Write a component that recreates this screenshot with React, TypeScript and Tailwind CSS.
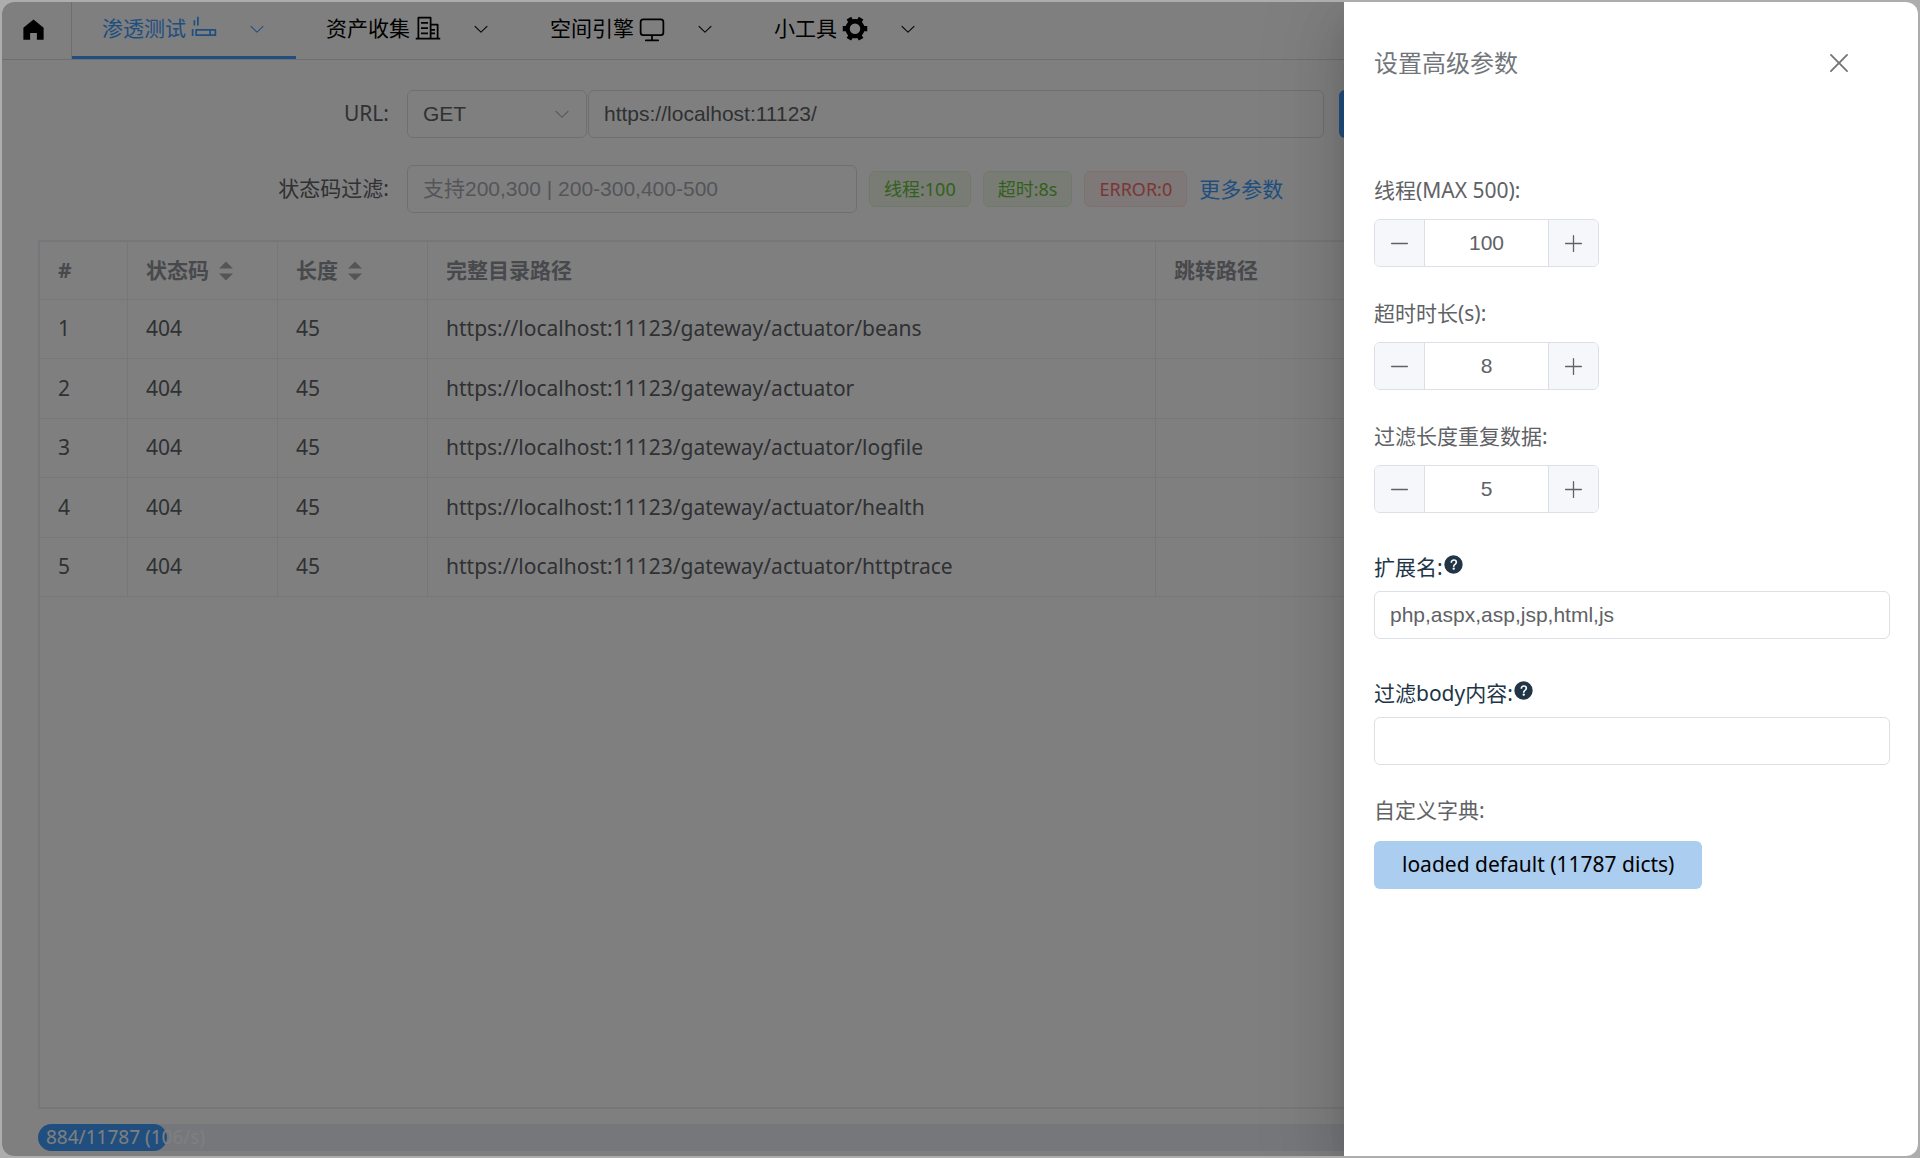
import React, { useState } from 'react';

const paths = {
  home: 'M512 128 128 447.936V896h255.936V640H640v256h255.936V447.936z',
  smoking:
    'M256 576v128h640V576zm-32-64h704a32 32 0 0 1 32 32v192a32 32 0 0 1-32 32H224a32 32 0 0 1-32-32V544a32 32 0 0 1 32-32M704 576h64v128h-64zM256 64h64v320h-64zM128 192h64v192h-64zM64 512h64v256H64z',
  office:
    'M192 128v704h384V128zm-32-64h448a32 32 0 0 1 32 32v768a32 32 0 0 1-32 32H160a32 32 0 0 1-32-32V96a32 32 0 0 1 32-32M256 256h256v64H256zm0 192h256v64H256zm0 192h256v64H256zm384-128h128v64H640zm0 128h128v64H640zM64 832h896v64H64zM640 384v448h192V384zm-32-64h256a32 32 0 0 1 32 32v512a32 32 0 0 1-32 32H608a32 32 0 0 1-32-32V352a32 32 0 0 1 32-32',
  monitor:
    'M544 768v128h192a32 32 0 1 1 0 64H288a32 32 0 1 1 0-64h192V768H192A128 128 0 0 1 64 640V256a128 128 0 0 1 128-128h640a128 128 0 0 1 128 128v384a128 128 0 0 1-128 128zM192 192a64 64 0 0 0-64 64v384a64 64 0 0 0 64 64h640a64 64 0 0 0 64-64V256a64 64 0 0 0-64-64z',
  tools:
    'M764.416 254.72a351.68 351.68 0 0 1 86.336 149.184H960v192.064H850.752a351.68 351.68 0 0 1-86.336 149.312l54.72 94.72-166.272 96-54.592-94.72a352.64 352.64 0 0 1-172.48 0L371.136 936l-166.272-96 54.72-94.72a351.68 351.68 0 0 1-86.336-149.312H64v-192h109.248a351.68 351.68 0 0 1 86.336-149.312L204.8 160l166.208-96h.192l54.656 94.592a352.64 352.64 0 0 1 172.352 0L652.8 64h.128L819.2 160l-54.72 94.72zM704 499.968a192 192 0 1 0-384 0 192 192 0 0 0 384 0',
  arrowDown:
    'M831.872 340.864 512 652.672 192.128 340.864a30.592 30.592 0 0 0-42.752 0 29.12 29.12 0 0 0 0 41.6L489.664 714.24a32 32 0 0 0 44.672 0l340.288-331.712a29.12 29.12 0 0 0 0-41.728 30.592 30.592 0 0 0-42.752 0z',
  question:
    'M512 64a448 448 0 1 1 0 896 448 448 0 0 1 0-896m23.744 191.488c-52.096 0-92.928 14.784-123.2 44.352-30.976 29.568-45.76 70.4-45.76 122.496h80.256c0-29.568 5.632-52.8 17.6-68.992 13.376-19.712 35.2-28.864 66.176-28.864 23.936 0 42.944 6.336 56.32 19.712 12.672 13.376 19.712 31.68 19.712 54.912 0 17.6-6.336 34.496-19.008 49.984l-8.448 9.856c-45.76 40.832-73.216 70.4-82.368 89.408-9.856 19.008-14.08 42.24-14.08 68.992v9.856h80.96v-9.856c0-16.896 3.52-31.68 10.56-45.76 6.336-12.672 15.488-24.64 28.16-35.2 33.792-29.568 54.208-48.576 60.544-55.616 16.896-22.528 26.048-51.392 26.048-86.592 0-42.944-14.08-76.736-42.24-101.376-28.16-25.344-65.472-37.312-111.232-37.312m-12.672 406.208a54.272 54.272 0 0 0-38.72 14.784 49.28 49.28 0 0 0-15.488 38.016c0 15.488 4.928 28.16 15.488 38.016A54.848 54.848 0 0 0 523.072 768c15.488 0 28.16-4.928 38.72-14.784a51.52 51.52 0 0 0 16.192-38.72 51.968 51.968 0 0 0-15.488-38.016 55.936 55.936 0 0 0-39.424-14.784',
  close:
    'M764.288 214.592 512 466.88 259.712 214.592a31.936 31.936 0 0 0-45.12 45.12L466.752 512 214.528 764.224a31.936 31.936 0 1 0 45.12 45.184L512 557.184l252.288 252.288a31.936 31.936 0 0 0 45.12-45.12L557.12 512.064l252.288-252.352a31.936 31.936 0 1 0-45.12-45.184z',
  minus: 'M128 544h768a32 32 0 1 0 0-64H128a32 32 0 0 0 0 64',
  plus: 'M480 480V128a32 32 0 0 1 64 0v352h352a32 32 0 1 1 0 64H544v352a32 32 0 1 1-64 0V544H128a32 32 0 0 1 0-64z',
};

type IconName = keyof typeof paths;

function Icon({ name, className }: { name: IconName; className: string }) {
  return (
    <svg viewBox="0 0 1024 1024" fill="currentColor" aria-hidden="true" className={`shrink-0 ${className}`}>
      <path d={paths[name]} />
    </svg>
  );
}

const menus: { label: string; icon: IconName; active?: boolean }[] = [
  { label: '渗透测试', icon: 'smoking', active: true },
  { label: '资产收集', icon: 'office' },
  { label: '空间引擎', icon: 'monitor' },
  { label: '小工具', icon: 'tools' },
];

const rows = ['beans', '', 'logfile', 'health', 'httptrace'].map((name, i) => ({
  id: i + 1,
  status: 404,
  length: 45,
  url: 'https://localhost:11123/gateway/actuator' + (name ? '/' + name : ''),
}));

const arial = "font-['Liberation_Sans','Noto_Sans_CJK_SC',sans-serif]";
const field = `h-12 rounded-md border border-[#dcdfe6] bg-white px-[15px] text-[21px] text-[#606266] outline-none placeholder:text-[#a8abb2] ${arial}`;
const cell = 'border-r border-b border-[#ebeef5] px-[18px]';
const tag = 'flex h-9 items-center rounded-md border px-[14px]';

function SortHeader({ label }: { label: string }) {
  return (
    <button className="flex items-center gap-[10px] font-bold">
      {label}
      <svg viewBox="0 0 14 20" fill="#a8abb2" aria-hidden="true" className="h-5 w-[14px]">
        <path d="M0 7.5 7 .5l7 7zM0 12.5l7 7 7-7z" />
      </svg>
    </button>
  );
}

function NumberField({ id, label, initial }: { id: string; label: string; initial: number }) {
  const [value, setValue] = useState(initial);
  return (
    <div className="mb-[27px]">
      <label htmlFor={id} className="block h-12 pt-1 leading-[30px]">{label}</label>
      <div className="flex h-12 w-[225px] overflow-hidden rounded-md border border-[#dcdfe6]">
        <button
          aria-label="-"
          onClick={() => setValue(value - 1)}
          className="flex w-[50px] items-center justify-center border-r border-[#dcdfe6] bg-[#f5f7fa]"
        >
          <Icon name="minus" className="size-[21px]" />
        </button>
        <input
          id={id}
          value={value}
          onChange={(e) => setValue(Number(e.target.value) || 0)}
          className={`min-w-0 flex-1 bg-white text-center outline-none ${arial}`}
        />
        <button
          aria-label="+"
          onClick={() => setValue(value + 1)}
          className="flex w-[50px] items-center justify-center border-l border-[#dcdfe6] bg-[#f5f7fa]"
        >
          <Icon name="plus" className="size-[21px]" />
        </button>
      </div>
    </div>
  );
}

function TextField({ id, label, initial }: { id: string; label: string; initial: string }) {
  return (
    <div className="mb-[30px] text-[#213547]">
      <label htmlFor={id} className="flex h-12 items-start pt-[9px] leading-[30px]">
        {label}
        <Icon name="question" className="mt-0.5 size-[21px]" />
      </label>
      <input id={id} defaultValue={initial} className={`w-full ${field}`} />
    </div>
  );
}

function Header() {
  return (
    <nav className="flex h-[58px] shrink-0 border-b border-[#dcdfe6]">
      <a href="#" aria-label="home" className="flex w-[70px] items-center border-r border-[#dcdfe6] pb-[3px] pl-[18px]">
        <Icon name="home" className="size-[27px]" />
      </a>
      {menus.map((m) => (
        <button
          key={m.label}
          className={`flex items-center border-b-[3px] px-[30px] ${m.active ? 'border-[#409eff] text-[#409eff]' : 'border-transparent'}`}
        >
          {m.label}
          <Icon name={m.icon} className="ml-1 size-7" />
          <Icon name="arrowDown" className="ml-[30px] size-[18px]" />
        </button>
      ))}
    </nav>
  );
}

function ScanForm() {
  return (
    <form className="flex flex-col gap-[27px]">
      <div className="flex items-center">
        <label htmlFor="url" className="mr-[18px] w-[351px] shrink-0 text-right">URL:</label>
        <div className="relative mr-px">
          <select aria-label="method" className={`w-[180px] appearance-none ${field}`}>
            <option>GET</option>
            <option>POST</option>
          </select>
          <Icon name="arrowDown" className="pointer-events-none absolute top-[15px] right-4 size-[18px] text-[#a8abb2]" />
        </div>
        <input id="url" defaultValue="https://localhost:11123/" className={`mr-[15px] w-[736px] ${field}`} />
        <button type="button" aria-label="start" className="h-12 w-24 rounded-md bg-[#409eff]" />
      </div>
      <div className="flex items-center">
        <label htmlFor="codes" className="mr-[18px] w-[351px] shrink-0 text-right">状态码过滤:</label>
        <input id="codes" placeholder="支持200,300 | 200-300,400-500" className={`w-[450px] ${field}`} />
        <div className="ml-3 flex items-center gap-3 text-lg leading-none">
          <span className={`border-[#e1f3d8] bg-[#f0f9eb] text-[#67c23a] ${tag}`}>线程:100</span>
          <span className={`border-[#e1f3d8] bg-[#f0f9eb] text-[#67c23a] ${tag}`}>超时:8s</span>
          <span className={`border-[#fde2e2] bg-[#fef0f0] text-[#f56c6c] ${tag}`}>ERROR:0</span>
          <a href="#" className="text-[21px] text-[#409eff]">更多参数</a>
        </div>
      </div>
    </form>
  );
}

function ResultTable() {
  return (
    <div className="mt-[27px] flex-1 border-2 border-[#ebeef5]">
      <table className="w-full table-fixed border-separate border-spacing-0 text-left">
        <thead className="text-[#909399]">
          <tr className="h-[58px]">
            <th className={`w-[88px] ${cell}`}>#</th>
            <th className={`w-[150px] ${cell}`}><SortHeader label="状态码" /></th>
            <th className={`w-[150px] ${cell}`}><SortHeader label="长度" /></th>
            <th className={`w-[728px] ${cell}`}>完整目录路径</th>
            <th className={cell}>跳转路径</th>
          </tr>
        </thead>
        <tbody>
          {rows.map((r) => (
            <tr key={r.id} className="h-[59px] even:h-[60px]">
              <td className={cell}>{r.id}</td>
              <td className={cell}>{r.status}</td>
              <td className={cell}>{r.length}</td>
              <td className={cell}>{r.url}</td>
              <td className={cell}></td>
            </tr>
          ))}
        </tbody>
      </table>
    </div>
  );
}

function SettingsDrawer() {
  return (
    <aside className="absolute inset-y-0 right-0 w-[574px] bg-white pr-7 pl-[30px] shadow-[0_24px_72px_24px_rgba(0,0,0,0.08),0_18px_48px_rgba(0,0,0,0.12),0_12px_24px_-12px_rgba(0,0,0,0.16)]">
      <header className="flex items-center justify-between pt-[45px] pr-9 text-[#72767b]">
        <h2 className="text-2xl">设置高级参数</h2>
        <button aria-label="close">
          <Icon name="close" className="size-[30px]" />
        </button>
      </header>
      <div className="pt-[92px]">
        <NumberField id="threads" label="线程(MAX 500):" initial={100} />
        <NumberField id="timeout" label="超时时长(s):" initial={8} />
        <NumberField id="repeat" label="过滤长度重复数据:" initial={5} />
        <div className="pt-[3px]">
          <TextField id="ext" label="扩展名:" initial="php,aspx,asp,jsp,html,js" />
          <TextField id="body" label="过滤body内容:" initial="" />
        </div>
        <p className="mb-4 leading-[30px]">自定义字典:</p>
        <button className="h-12 rounded-md bg-[#abcdef] px-7 text-black">loaded default (11787 dicts)</button>
      </div>
    </aside>
  );
}

export default function App() {
  return (
    <div className="flex min-h-screen bg-[#adadad] p-0.5 font-['Noto_Sans','Noto_Sans_CJK_SC',sans-serif] text-[21px]">
      <div className="relative flex flex-1 flex-col overflow-hidden rounded-xl bg-white text-black">
        <Header />
        <main className="flex flex-1 flex-col px-9 pt-[30px] pb-[5px] text-[#606266]">
          <ScanForm />
          <ResultTable />
          <div className="mt-[15px] h-[27px] rounded-full bg-[#ebeef5]">
            <div className="flex h-full w-[7%] items-center rounded-full bg-[#409eff] pl-2 text-[19px] leading-none whitespace-nowrap text-white">
              884/11787 (106/s)
            </div>
          </div>
        </main>
        <div className="absolute inset-0 overflow-hidden bg-black/50 text-[#606266]">
          <SettingsDrawer />
        </div>
      </div>
    </div>
  );
}
